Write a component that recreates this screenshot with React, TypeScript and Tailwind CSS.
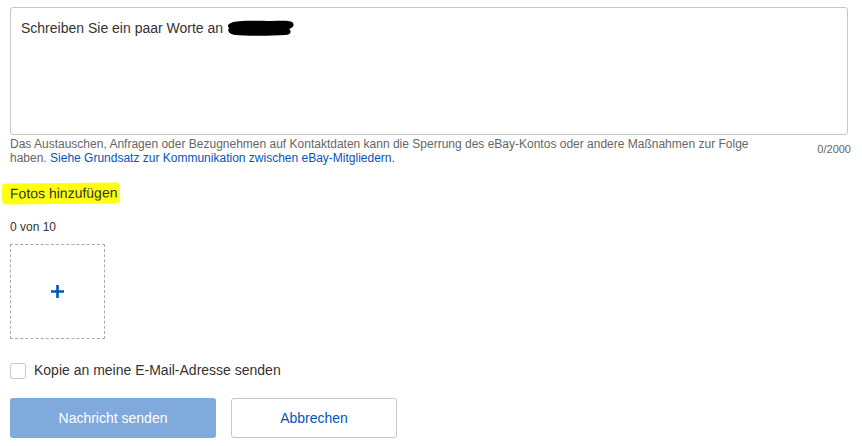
import { useState } from "react";

const Redaction = () => (
  <svg width="68" height="18" viewBox="0 0 68 18" className="inline-block align-middle ml-1 -mt-[2px]">
    <path
      d="M4 4 C10 1 30 2 44 2 C54 2 64 1 66 4 C68 8 64 9 62 10 C65 12 64 16 58 16 C44 17 20 17 8 16 C2 15 0 12 2 9 C0 7 1 5 4 4 Z"
      fill="#000"
    />
  </svg>
);

const App = () => {
  const [text, setText] = useState("");
  const [copy, setCopy] = useState(false);

  return (
    <div className="w-[862px] h-[446px] bg-white px-[10px] pt-[7px] font-['Liberation_Sans',Arial,sans-serif] text-[#333]">
      <div className="w-[838px]">
        <div className="relative h-[128px] rounded-[3px] border border-[#c7c7c7] bg-white">
          <div className="pointer-events-none absolute left-[10px] top-[11px] text-[14px] text-[#333] leading-[18px]">
            {text === "" && (
              <span>
                Schreiben Sie ein paar Worte an
                <Redaction />
              </span>
            )}
          </div>
          <textarea
            value={text}
            onChange={(e) => setText(e.target.value)}
            className="w-full h-full resize-none bg-transparent px-[10px] py-[11px] text-[14px] outline-none"
          />
        </div>

        <div className="flex items-start justify-between mt-[3px]">
          <p className="w-[760px] text-[12px] leading-[13.5px] text-[#666]">
            Das Austauschen, Anfragen oder Bezugnehmen auf Kontaktdaten kann die Sperrung des eBay-Kontos oder andere Maßnahmen zur Folge
            haben.{" "}
            <a href="#" className="text-[#0654ba]">
              Siehe Grundsatz zur Kommunikation zwischen eBay-Mitgliedern.
            </a>
          </p>
          <span className="mt-[3px] mr-[-3px] text-[11px] text-[#666]">0/2000</span>
        </div>
      </div>

      <div className="mt-[16px] -ml-[8px]">
        <span className="inline-block bg-[#ffff14] rounded-[4px] pl-[8px] pr-[3px] py-[2px] text-[14px] leading-[17px] text-[#333] -rotate-[0.6deg]">
          Fotos hinzufügen
        </span>
      </div>

      <div className="mt-[15px] text-[12px] leading-[14px] text-[#333]">0 von 10</div>

      <button className="mt-[10px] flex h-[95px] w-[95px] items-center justify-center border border-dashed border-[#aaa] bg-white">
        <svg width="15" height="15" viewBox="0 0 15 15">
          <path d="M7.5 1v13M1 7.5h13" stroke="#0654ba" strokeWidth="2.6" />
        </svg>
      </button>

      <label className="mt-[21px] flex items-center gap-[8px] cursor-pointer">
        <input
          type="checkbox"
          checked={copy}
          onChange={() => setCopy(!copy)}
          className="h-[16px] w-[16px] appearance-none rounded-[3px] border border-[#c7c7c7] bg-white"
        />
        <span className="text-[14px] text-[#333]">Kopie an meine E-Mail-Adresse senden</span>
      </label>

      <div className="mt-[17px] flex gap-[15px]">
        <button className="h-[40px] w-[206px] rounded-[3px] bg-[#80a9dc] text-[14px] text-white">
          Nachricht senden
        </button>
        <button className="h-[40px] w-[166px] rounded-[3px] border border-[#c7c7c7] bg-white text-[14px] text-[#0654ba]">
          Abbrechen
        </button>
      </div>
    </div>
  );
};

export default App;
